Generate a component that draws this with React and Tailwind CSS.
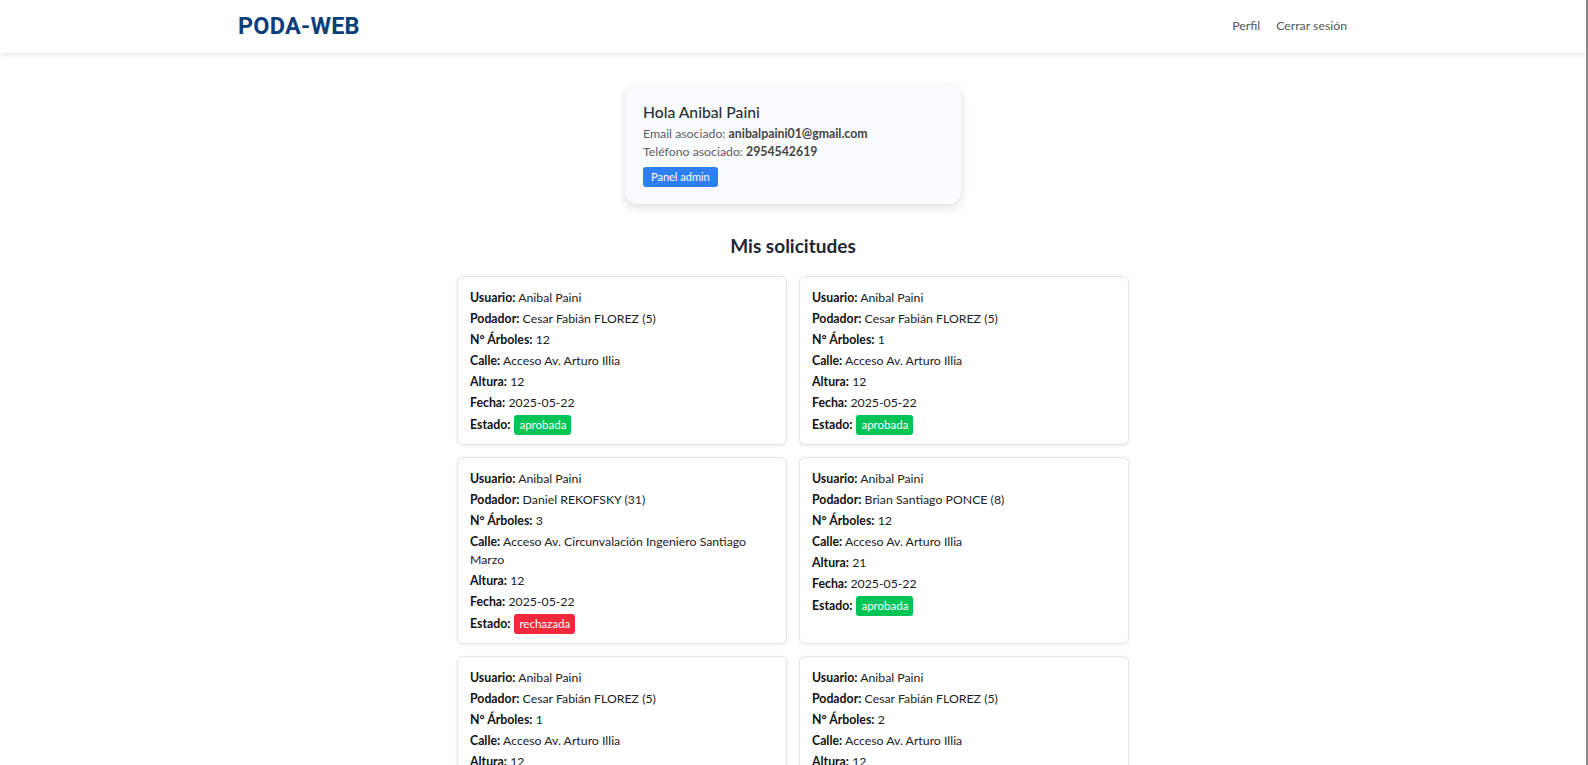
import React from 'react';

const solicitudes = [
  { podador: 'Cesar Fabián FLOREZ (5)', arboles: 12, calle: 'Acceso Av. Arturo Illia', altura: 12, fecha: '2025-05-22', estado: 'aprobada' },
  { podador: 'Cesar Fabián FLOREZ (5)', arboles: 1, calle: 'Acceso Av. Arturo Illia', altura: 12, fecha: '2025-05-22', estado: 'aprobada' },
  { podador: 'Daniel REKOFSKY (31)', arboles: 3, calle: 'Acceso Av. Circunvalación Ingeniero Santiago Marzo', altura: 12, fecha: '2025-05-22', estado: 'rechazada' },
  { podador: 'Brian Santiago PONCE (8)', arboles: 12, calle: 'Acceso Av. Arturo Illia', altura: 21, fecha: '2025-05-22', estado: 'aprobada' },
  { podador: 'Cesar Fabián FLOREZ (5)', arboles: 1, calle: 'Acceso Av. Arturo Illia', altura: 12, fecha: '2025-05-22', estado: 'pendiente' },
  { podador: 'Cesar Fabián FLOREZ (5)', arboles: 2, calle: 'Acceso Av. Arturo Illia', altura: 12, fecha: '2025-05-22', estado: 'pendiente' },
];

const badgeColor = {
  aprobada: 'bg-[#00c456]',
  rechazada: 'bg-[#f2283d]',
  pendiente: 'bg-[#f0ad1c]',
};

const Field = ({ label, children }) => (
  <p className="mb-[3px] leading-[18px]">
    <span className="font-bold text-[#111]">{label}:</span> {children}
  </p>
);

const SolicitudCard = ({ s }) => (
  <div className="bg-white border border-[#e3e5e8] rounded-md shadow-[0_1px_3px_rgba(0,0,0,0.08)] px-3 pt-3 pb-1.5 text-[12.3px] text-[#222]">
    <Field label="Usuario">Anibal Paini</Field>
    <Field label="Podador">{s.podador}</Field>
    <Field label="N° Árboles">{s.arboles}</Field>
    <Field label="Calle">{s.calle}</Field>
    <Field label="Altura">{s.altura}</Field>
    <Field label="Fecha">{s.fecha}</Field>
    <p className="mb-[3px] leading-[20px] flex items-center gap-1">
      <span className="font-bold text-[#111]">Estado:</span>
      <span className={`${badgeColor[s.estado]} text-white text-[11.5px] leading-[20px] px-[5px] rounded-[3px]`}>
        {s.estado}
      </span>
    </p>
  </div>
);

export default function App() {
  return (
    <div className="min-h-screen bg-white border-r-2 border-[#8a8a8a] font-['Lato',sans-serif]">
      {/* Navbar */}
      <nav className="h-[53px] bg-white shadow-[0_2px_5px_rgba(0,0,0,0.1)]">
        <div className="max-w-[1140px] mx-auto px-3 h-full flex items-center justify-between">
          <span className="font-['Roboto',sans-serif] font-bold text-[23.5px] text-[#0c3f7a] tracking-[0.2px] ml-[3px]">
            PODA-WEB
          </span>
          <div className="flex items-center text-[12.3px] text-[#555]">
            <a className="px-2">Perfil</a>
            <a className="pl-2 pr-1">Cerrar sesión</a>
          </div>
        </div>
      </nav>

      <main className="flex flex-col items-center pt-[33px] pb-10">
        {/* Profile card */}
        <div className="w-[336px] bg-[#fafbfc] rounded-xl shadow-[0_3px_10px_rgba(0,0,0,0.14)] px-[18px] pt-[15px] pb-[17px]">
          <h2 className="text-[15.7px] font-medium text-[#2b2f33] leading-[22px] mb-[2px]">Hola Anibal Paini</h2>
          <p className="text-[12.3px] text-[#5a5f64] leading-[18px]">
            Email asociado: <span className="font-bold text-[#444]">anibalpaini01@gmail.com</span>
          </p>
          <p className="text-[12.3px] text-[#5a5f64] leading-[18px]">
            Teléfono asociado: <span className="font-bold text-[#444]">2954542619</span>
          </p>
          <button className="mt-[6px] bg-[#2f7ff4] text-white text-[11px] leading-[20px] px-2 rounded-[3px]">
            Panel admin
          </button>
        </div>

        <h1 className="mt-[30px] text-[19px] font-bold text-[#1e2733] leading-[24px]">Mis solicitudes</h1>

        {/* Requests grid */}
        <div className="mt-[18px] w-full max-w-[672px] grid grid-cols-2 gap-3">
          {solicitudes.map((s, idx) => (
            <SolicitudCard key={idx} s={s} />
          ))}
        </div>
      </main>
    </div>
  );
}
